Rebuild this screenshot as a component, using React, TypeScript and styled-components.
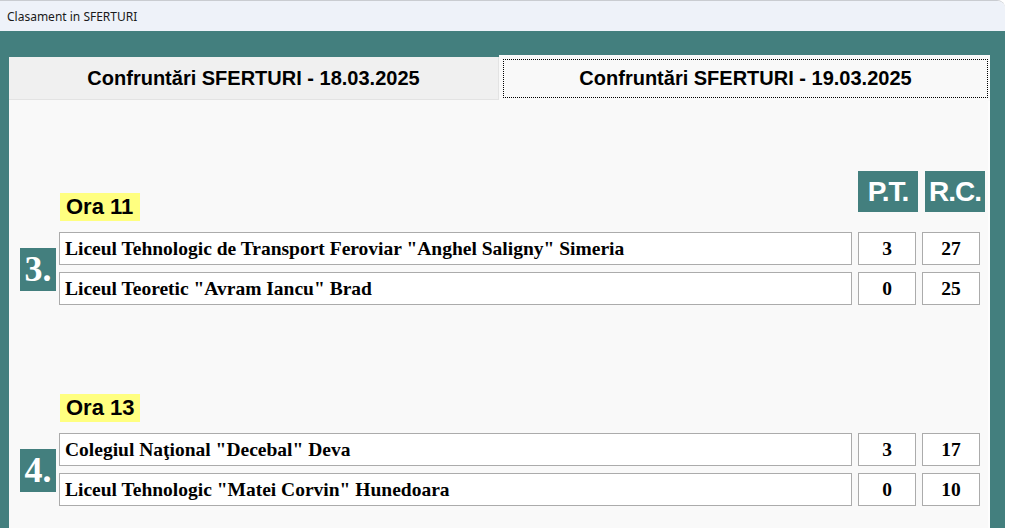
import styled, { createGlobalStyle } from "styled-components";

const GlobalStyle = createGlobalStyle`
  html, body {
    margin: 0;
    padding: 0;
    background: #ffffff;
  }
`;

const matches = [
  {
    ora: "Ora 11",
    nr: "3.",
    headers: true,
    teams: [
      { name: 'Liceul Tehnologic de Transport Feroviar "Anghel Saligny" Simeria', pt: "3", rc: "27" },
      { name: 'Liceul Teoretic "Avram Iancu" Brad', pt: "0", rc: "25" },
    ],
  },
  {
    ora: "Ora 13",
    nr: "4.",
    headers: false,
    teams: [
      { name: 'Colegiul Naţional "Decebal" Deva', pt: "3", rc: "17" },
      { name: 'Liceul Tehnologic "Matei Corvin" Hunedoara', pt: "0", rc: "10" },
    ],
  },
];

const App = () => {
  return (
    <>
      <GlobalStyle />
      <Window>
        <TitleBar>Clasament in SFERTURI</TitleBar>
        <Client>
          <Tabs>
            <Tab>Confruntări SFERTURI - 18.03.2025</Tab>
            <Tab $active>
              <Focus>Confruntări SFERTURI - 19.03.2025</Focus>
            </Tab>
          </Tabs>
          <Panel>
            {matches.map((m, i) => (
              <Section key={m.nr} $first={i === 0}>
                <Head>
                  <Ora>{m.ora}</Ora>
                  {m.headers && (
                    <Headers>
                      <HeaderCell>P.T.</HeaderCell>
                      <HeaderCell>R.C.</HeaderCell>
                    </Headers>
                  )}
                </Head>
                <Match>
                  <Badge>{m.nr}</Badge>
                  <Rows>
                    {m.teams.map((t) => (
                      <Row key={t.name}>
                        <NameBox>{t.name}</NameBox>
                        <NumBox>{t.pt}</NumBox>
                        <NumBox>{t.rc}</NumBox>
                      </Row>
                    ))}
                  </Rows>
                </Match>
              </Section>
            ))}
          </Panel>
        </Client>
      </Window>
    </>
  );
};

export default App;

const Window = styled.div`
  width: 1005px;
  height: 528px;
  display: flex;
  flex-direction: column;
  border-top: 1px solid #c9ccd1;
  border-top-right-radius: 8px;
  overflow: hidden;
  box-sizing: border-box;
`;

const TitleBar = styled.div`
  height: 30px;
  flex-shrink: 0;
  background: #eef2f9;
  padding-left: 7px;
  display: flex;
  align-items: center;
  font-family: "Noto Sans", "Open Sans", sans-serif;
  font-size: 12px;
  color: #1a1a1a;
`;

const Client = styled.div`
  flex: 1;
  background: #437f7e;
  padding: 24px 15px 0 9px;
  display: flex;
  flex-direction: column;
  min-height: 0;
`;

const Tabs = styled.div`
  display: flex;
  height: 45px;
  flex-shrink: 0;
`;

const Tab = styled.div<{ $active?: boolean }>`
  width: ${(p) => (p.$active ? "491px" : "490px")};
  margin-top: ${(p) => (p.$active ? "0" : "2px")};
  margin-bottom: ${(p) => (p.$active ? "-1px" : "0")};
  background: ${(p) => (p.$active ? "#f9f9f9" : "#f0f0f0")};
  border-bottom: ${(p) => (p.$active ? "none" : "1px solid #e3e3e3")};
  border-right: ${(p) => (p.$active ? "none" : "1px solid #e3e3e3")};
  box-sizing: border-box;
  display: flex;
  align-items: center;
  justify-content: center;
  padding: ${(p) => (p.$active ? "4px 2px 3px 4px" : "0")};
  position: relative;
  z-index: 1;
  font-family: "Liberation Sans", Arial, sans-serif;
  font-weight: bold;
  font-size: 20px;
  color: #000;
`;

const Focus = styled.div`
  flex: 1;
  align-self: stretch;
  border: 1px dotted #000;
  display: flex;
  align-items: center;
  justify-content: center;
`;

const Panel = styled.div`
  flex: 1;
  width: 981px;
  background: #f9f9f9;
  border-right: 2px solid #fdfdfd;
  box-sizing: border-box;
  padding: 71px 3px 0 11px;
`;

const Section = styled.div<{ $first?: boolean }>`
  margin-top: ${(p) => (p.$first ? "0" : "67px")};
  display: flex;
  flex-direction: column;
`;

const Head = styled.div`
  display: flex;
  justify-content: space-between;
  align-items: flex-start;
  padding-left: 40px;
`;

const Ora = styled.div`
  margin-top: 22px;
  margin-bottom: 11px;
  width: 80px;
  height: 28px;
  background: #ffff80;
  box-sizing: border-box;
  padding-left: 6px;
  display: flex;
  align-items: center;
  font-family: "Liberation Sans", Arial, sans-serif;
  font-weight: bold;
  font-size: 22px;
  color: #000;
`;

const Headers = styled.div`
  display: flex;
  gap: 7px;
`;

const HeaderCell = styled.div`
  width: 60px;
  height: 41px;
  background: #437f7e;
  color: #fff;
  display: flex;
  align-items: center;
  justify-content: center;
  font-family: "Liberation Sans", Arial, sans-serif;
  font-weight: bold;
  font-size: 28px;
  letter-spacing: -1px;
`;

const Match = styled.div`
  display: flex;
  align-items: center;
  gap: 3px;
`;

const Badge = styled.div`
  width: 36px;
  height: 43px;
  background: #437f7e;
  color: #fff;
  display: flex;
  align-items: center;
  justify-content: center;
  font-family: "Liberation Serif", "Times New Roman", serif;
  font-weight: bold;
  font-size: 36px;
  line-height: 1;
  margin-top: 1px;
`;

const Rows = styled.div`
  display: flex;
  flex-direction: column;
  gap: 7px;
`;

const Row = styled.div`
  display: flex;
  gap: 6px;
`;

const Box = styled.div`
  height: 33px;
  box-sizing: border-box;
  background: #fff;
  border: 1px solid #ababab;
  display: flex;
  align-items: center;
  font-family: "Liberation Serif", "Times New Roman", serif;
  font-weight: bold;
  font-size: 19.5px;
  color: #000;
`;

const NameBox = styled(Box)`
  width: 793px;
  padding-left: 5px;
`;

const NumBox = styled(Box)`
  width: 58px;
  justify-content: center;
`;
